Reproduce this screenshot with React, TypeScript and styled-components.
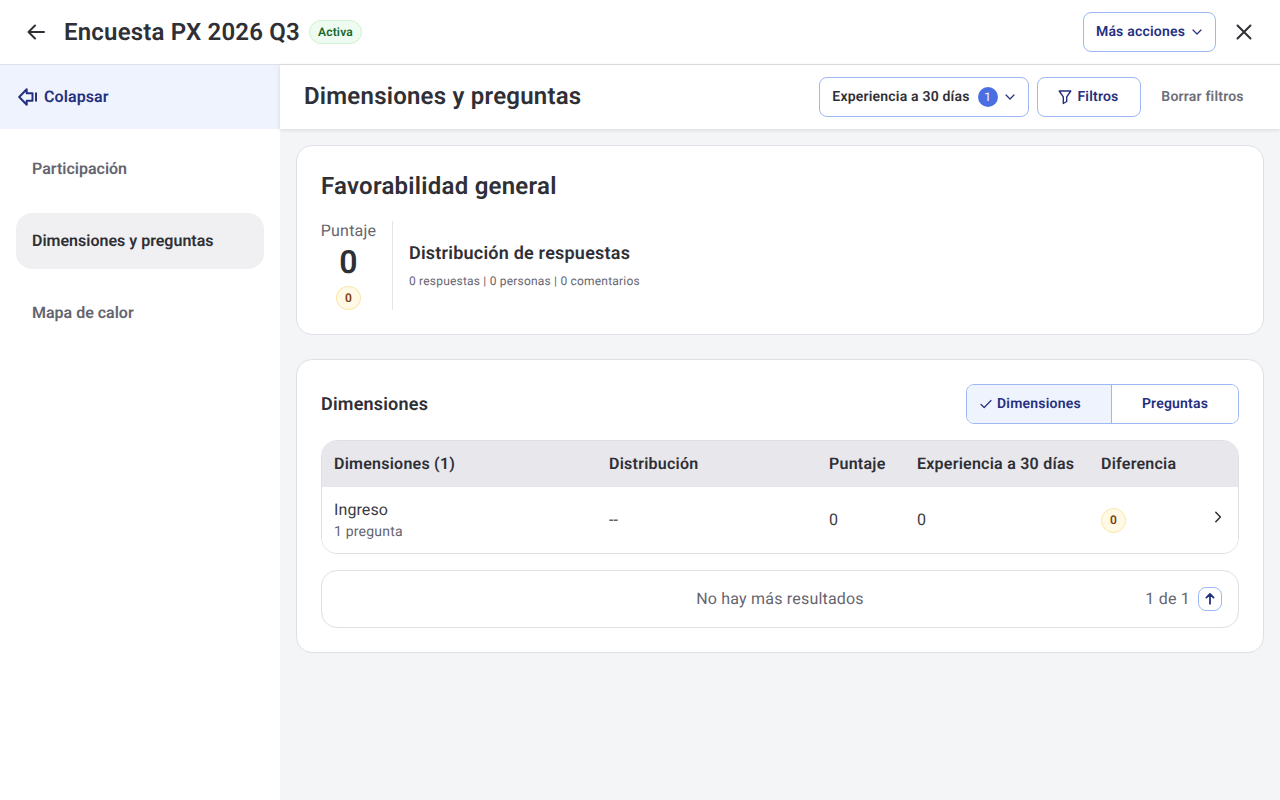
import React from 'react'
import styled, { createGlobalStyle } from 'styled-components'

const GlobalStyle = createGlobalStyle`
    html, body {
        margin: 0;
        padding: 0;
        height: 100%;
    }
    body {
        font-family: Roboto, "Liberation Sans", sans-serif;
        color: #2f2f36;
        background: #fff;
        text-rendering: geometricPrecision;
    }
    * {
        box-sizing: border-box;
    }
`

const Page = styled.div`
    width: 1280px;
    height: 800px;
    display: flex;
    flex-direction: column;
    overflow: hidden;
`

const TopBar = styled.header`
    height: 65px;
    flex: none;
    display: flex;
    align-items: center;
    padding: 0 24px;
    background: #fff;
    border-bottom: 1px solid #dfe0e6;
`

const IconSlot = styled.span`
    display: inline-flex;
    align-items: center;
    justify-content: center;
    flex: none;
`

const PageTitle = styled.h1`
    margin: 0 9px 0 16px;
    font-size: 24px;
    line-height: 32px;
    font-weight: 600;
    letter-spacing: 0.2px;
    color: #2f2f36;
`

const StatusTag = styled.span`
    height: 24px;
    padding: 0 8px;
    display: inline-flex;
    align-items: center;
    font-size: 12px;
    font-weight: 600;
    letter-spacing: 0.2px;
    color: #17692e;
    background: #eefbf0;
    border: 1px solid #cdf2d5;
    border-radius: 12px;
`

const Spacer = styled.div`
    flex: 1;
`

const OutlineButton = styled.button<{ $width: number; $dark?: boolean; $shift?: number }>`
    width: ${({ $width }) => $width}px;
    height: 40px;
    padding: 0 0 0 ${({ $shift }) => $shift ?? 0}px;
    display: inline-flex;
    align-items: center;
    justify-content: center;
    font-family: inherit;
    font-size: 14px;
    font-weight: 600;
    letter-spacing: 0.2px;
    text-rendering: geometricPrecision;
    color: ${({ $dark }) => ($dark ? '#2f2f36' : '#25307f')};
    background: #fff;
    border: 1px solid #9db8f2;
    border-radius: 8px;
`

const ButtonChevronSlot = styled(IconSlot)`
    margin-left: 4px;
`

const FilterIconSlot = styled(IconSlot)`
    margin-right: 4px;
`

const FiltersLabel = styled.span`
    margin-right: 2px;
`

const CloseSlot = styled(IconSlot)`
    margin-left: 16px;
`

const Body = styled.div`
    flex: 1;
    display: flex;
    min-height: 0;
`

const Sidebar = styled.nav`
    width: 280px;
    flex: none;
    background: #fff;
`

const CollapseRow = styled.div`
    height: 64px;
    padding-left: 18px;
    display: flex;
    align-items: center;
    gap: 5px;
    font-size: 16px;
    font-weight: 600;
    letter-spacing: 0.1px;
    color: #25307f;
    background: #eff3fd;
`

const CollapseLabel = styled.span`
    margin-top: -2px;
`

const NavList = styled.div`
    padding: 12px 16px;
    display: flex;
    flex-direction: column;
    gap: 16px;
`

const NavItem = styled.div<{ $active?: boolean }>`
    height: 56px;
    padding: 0 16px 2px;
    display: flex;
    align-items: center;
    font-size: 16px;
    font-weight: 600;
    color: ${({ $active }) => ($active ? '#2f2f36' : '#65656f')};
    background: ${({ $active }) => ($active ? '#f0f0f2' : 'transparent')};
    border-radius: 16px;
`

const Main = styled.main`
    flex: 1;
    min-width: 0;
    background: #f4f5f7;
`

const SubHeader = styled.div`
    height: 64px;
    padding: 0 24px;
    display: flex;
    align-items: center;
    background: #fff;
    box-shadow: 0 1px 4px rgba(40, 40, 60, 0.14);
`

const SubTitle = styled.h2`
    margin: -2px 0 0;
    font-size: 24px;
    line-height: 32px;
    font-weight: 600;
    letter-spacing: 0.22px;
    color: #2f2f36;
`

const FilterGroup = styled.div`
    display: flex;
    align-items: center;
    gap: 8px;
`

const CountBadge = styled.span`
    width: 20px;
    height: 20px;
    margin: 0 4px 0 8px;
    display: inline-flex;
    align-items: center;
    justify-content: center;
    font-size: 12px;
    font-weight: 400;
    color: #fff;
    background: #4a6fe3;
    border-radius: 50%;
`

const ClearButton = styled.button`
    width: 107px;
    height: 40px;
    padding: 0;
    font-family: inherit;
    font-size: 14px;
    font-weight: 600;
    letter-spacing: 0.2px;
    text-rendering: geometricPrecision;
    color: #6e6e78;
    background: none;
    border: none;
`

const Content = styled.div`
    padding: 16px;
    display: flex;
    flex-direction: column;
    gap: 24px;
`

const Card = styled.section`
    padding: 24px;
    background: #fff;
    border: 1px solid #dfe0e6;
    border-radius: 16px;
`

const CardTitle = styled.h3`
    margin: 0 0 19px;
    font-size: 24px;
    line-height: 32px;
    font-weight: 600;
    letter-spacing: 0.25px;
    color: #2f2f36;
`

const ScoreRow = styled.div`
    display: flex;
    height: 89px;
`

const ScoreColumn = styled.div`
    width: 72px;
    padding-right: 16px;
    display: flex;
    flex-direction: column;
    align-items: center;
    border-right: 1px solid #e4e5ea;
`

const ScoreLabel = styled.span`
    font-size: 16px;
    line-height: 20px;
    letter-spacing: 0.2px;
    color: #65656f;
`

const ScoreValue = styled.span`
    padding-top: 1px;
    font-size: 32px;
    line-height: 40px;
    font-weight: 600;
    color: #2f2f36;
`

const DiffBadge = styled.span`
    width: 25px;
    height: 25px;
    display: inline-flex;
    align-items: center;
    justify-content: center;
    font-size: 12px;
    font-weight: 600;
    color: #7a3f0c;
    background: #fff9e6;
    border: 1px solid #f9e6a8;
    border-radius: 50%;
`

const ScoreBadge = styled(DiffBadge)`
    margin-top: 4px;
`

const DistributionBlock = styled.div`
    padding: 21px 0 0 16px;
`

const DistributionTitle = styled.div`
    font-size: 18px;
    line-height: 24px;
    font-weight: 600;
    letter-spacing: 0.22px;
    color: #2f2f36;
`

const DistributionMeta = styled.div`
    margin-top: 7px;
    font-size: 12px;
    line-height: 16px;
    letter-spacing: 0.2px;
    color: #65656f;
`

const SectionHead = styled.div`
    height: 40px;
    margin-bottom: 16px;
    display: flex;
    align-items: center;
    justify-content: space-between;
`

const SectionTitle = styled.h4`
    margin: 0;
    font-size: 18px;
    font-weight: 600;
    letter-spacing: 0.2px;
    color: #2f2f36;
`

const Segmented = styled.div`
    width: 273px;
    height: 40px;
    display: grid;
    grid-template-columns: 145px 1fr;
    border: 1px solid #9db8f2;
    border-radius: 8px;
    overflow: hidden;
`

const Segment = styled.div<{ $active?: boolean }>`
    padding-left: ${({ $active }) => ($active ? '12px' : '0')};
    display: flex;
    align-items: center;
    justify-content: ${({ $active }) => ($active ? 'flex-start' : 'center')};
    gap: 4px;
    font-size: 14px;
    font-weight: 600;
    letter-spacing: 0.2px;
    color: #25307f;
    background: ${({ $active }) => ($active ? '#eff3fd' : '#fff')};
    border-right: ${({ $active }) => ($active ? '1px solid #9db8f2' : 'none')};
`

const Table = styled.div`
    border: 1px solid #dfe0e6;
    border-radius: 16px;
    overflow: hidden;
`

const columns = '275px 220px 88px 184px 1fr 40px'

const HeadRow = styled.div`
    height: 46px;
    padding: 0 0 2px 12px;
    display: grid;
    grid-template-columns: ${columns};
    align-items: center;
    font-size: 16px;
    font-weight: 600;
    letter-spacing: 0.24px;
    color: #2f2f36;
    background: #e8e8ec;
`

const DataRow = styled.div`
    height: 66px;
    display: grid;
    grid-template-columns: ${columns};
    align-items: center;
    padding-left: 12px;
    font-size: 16px;
    color: #3a3a42;
    background: #fff;
`

const NameCell = styled.div`
    margin-top: 2px;
`

const ValueCell = styled.span`
    margin-top: -2px;
`

const RowName = styled.div`
    font-size: 16px;
    line-height: 20px;
    letter-spacing: 0.1px;
`

const RowSub = styled.div`
    margin-top: 2px;
    font-size: 14px;
    line-height: 20px;
    letter-spacing: 0.2px;
    color: #65656f;
`

const ChevronCell = styled.div`
    display: flex;
    align-items: center;
    justify-content: flex-end;
    padding-right: 12px;
    margin-top: -6px;
`

const Pager = styled.div`
    position: relative;
    height: 58px;
    margin-top: 16px;
    padding-bottom: 2px;
    display: flex;
    align-items: center;
    justify-content: center;
    font-size: 16px;
    letter-spacing: 0.2px;
    color: #65656f;
    border: 1px solid #dfe0e6;
    border-radius: 16px;
`

const PagerRight = styled.div`
    position: absolute;
    right: 16px;
    top: 16px;
    display: flex;
    align-items: center;
    gap: 8px;
`

const PagerCount = styled.span`
    margin-top: -2px;
`

const PagerButton = styled.button`
    width: 24px;
    height: 24px;
    padding: 0;
    display: inline-flex;
    align-items: center;
    justify-content: center;
    background: #fff;
    border: 1px solid #9db8f2;
    border-radius: 8px;
`

const Chevron: React.FC = () => (
    <svg width="16" height="16" viewBox="0 0 16 16" fill="none" stroke="#25307f" strokeWidth="1.2" strokeLinecap="round" strokeLinejoin="round">
        <path d="M4 6 8 10 12 6" />
    </svg>
)

const App: React.FC = () => {
    return (
        <Page>
            <GlobalStyle />
            <TopBar>
                <IconSlot>
                    <svg width="24" height="24" viewBox="0 0 24 24" fill="none" stroke="#2f2f36" strokeWidth="2" strokeLinecap="round" strokeLinejoin="round">
                        <path d="M20 12H5M11 5.5 4.5 12l6.5 6.5" />
                    </svg>
                </IconSlot>
                <PageTitle>Encuesta PX 2026 Q3</PageTitle>
                <StatusTag>Activa</StatusTag>
                <Spacer />
                <OutlineButton $width={133} $shift={2}>
                    Más acciones
                    <ButtonChevronSlot><Chevron /></ButtonChevronSlot>
                </OutlineButton>
                <CloseSlot>
                    <svg width="24" height="24" viewBox="0 0 24 24" fill="none" stroke="#2f2f36" strokeWidth="2" strokeLinecap="round">
                        <path d="M5.5 5.5l13 13M18.5 5.5l-13 13" />
                    </svg>
                </CloseSlot>
            </TopBar>
            <Body>
                <Sidebar>
                    <CollapseRow>
                        <svg width="21" height="18" viewBox="0 0 21 18" fill="none" stroke="#25307f" strokeWidth="2" strokeLinejoin="round" strokeLinecap="round">
                            <path d="M1.2 9 8.7 1.3V5.2H14.5V12.8H8.7V16.7L1.2 9Z" />
                            <path d="M18 5.2V12.8" />
                        </svg>
                        <CollapseLabel>Colapsar</CollapseLabel>
                    </CollapseRow>
                    <NavList>
                        <NavItem>Participación</NavItem>
                        <NavItem $active>Dimensiones y preguntas</NavItem>
                        <NavItem>Mapa de calor</NavItem>
                    </NavList>
                </Sidebar>
                <Main>
                    <SubHeader>
                        <SubTitle>Dimensiones y preguntas</SubTitle>
                        <Spacer />
                        <FilterGroup>
                            <OutlineButton $width={210} $dark $shift={2}>
                                Experiencia a 30 días
                                <CountBadge>1</CountBadge>
                                <Chevron />
                            </OutlineButton>
                            <OutlineButton $width={104}>
                                <FilterIconSlot>
                                    <svg width="16" height="16" viewBox="0 0 16 16" fill="none" stroke="#25307f" strokeWidth="1.4" strokeLinejoin="round">
                                        <path d="M2.2 2h11.6L9.7 7.8v4.7l-3.4 2V7.8L2.2 2Z" />
                                    </svg>
                                </FilterIconSlot>
                                <FiltersLabel>Filtros</FiltersLabel>
                            </OutlineButton>
                            <ClearButton>Borrar filtros</ClearButton>
                        </FilterGroup>
                    </SubHeader>
                    <Content>
                        <Card>
                            <CardTitle>Favorabilidad general</CardTitle>
                            <ScoreRow>
                                <ScoreColumn>
                                    <ScoreLabel>Puntaje</ScoreLabel>
                                    <ScoreValue>0</ScoreValue>
                                    <ScoreBadge>0</ScoreBadge>
                                </ScoreColumn>
                                <DistributionBlock>
                                    <DistributionTitle>Distribución de respuestas</DistributionTitle>
                                    <DistributionMeta>0 respuestas | 0 personas | 0 comentarios</DistributionMeta>
                                </DistributionBlock>
                            </ScoreRow>
                        </Card>
                        <Card>
                            <SectionHead>
                                <SectionTitle>Dimensiones</SectionTitle>
                                <Segmented>
                                    <Segment $active>
                                        <svg width="14" height="14" viewBox="0 0 14 14" fill="none" stroke="#25307f" strokeWidth="1.2" strokeLinecap="round" strokeLinejoin="round">
                                            <path d="M2 7.5 5.2 10.5 12 3.5" />
                                        </svg>
                                        Dimensiones
                                    </Segment>
                                    <Segment>Preguntas</Segment>
                                </Segmented>
                            </SectionHead>
                            <Table>
                                <HeadRow>
                                    <span>Dimensiones (1)</span>
                                    <span>Distribución</span>
                                    <span>Puntaje</span>
                                    <span>Experiencia a 30 días</span>
                                    <span>Diferencia</span>
                                    <span />
                                </HeadRow>
                                <DataRow>
                                    <NameCell>
                                        <RowName>Ingreso</RowName>
                                        <RowSub>1 pregunta</RowSub>
                                    </NameCell>
                                    <ValueCell>--</ValueCell>
                                    <ValueCell>0</ValueCell>
                                    <ValueCell>0</ValueCell>
                                    <span><DiffBadge>0</DiffBadge></span>
                                    <ChevronCell>
                                        <svg width="16" height="16" viewBox="0 0 16 16" fill="none" stroke="#2f2f36" strokeWidth="1.5" strokeLinecap="round" strokeLinejoin="round">
                                            <path d="M5.8 3.2 10.4 8 5.8 12.8" />
                                        </svg>
                                    </ChevronCell>
                                </DataRow>
                            </Table>
                            <Pager>
                                No hay más resultados
                                <PagerRight>
                                    <PagerCount>1 de 1</PagerCount>
                                    <PagerButton>
                                        <svg width="16" height="16" viewBox="0 0 16 16" fill="none" stroke="#25307f" strokeWidth="1.8" strokeLinecap="round" strokeLinejoin="round">
                                            <path d="M8 12.8V3M4.4 6.6 8 3l3.6 3.6" />
                                        </svg>
                                    </PagerButton>
                                </PagerRight>
                            </Pager>
                        </Card>
                    </Content>
                </Main>
            </Body>
        </Page>
    )
}

export default App
